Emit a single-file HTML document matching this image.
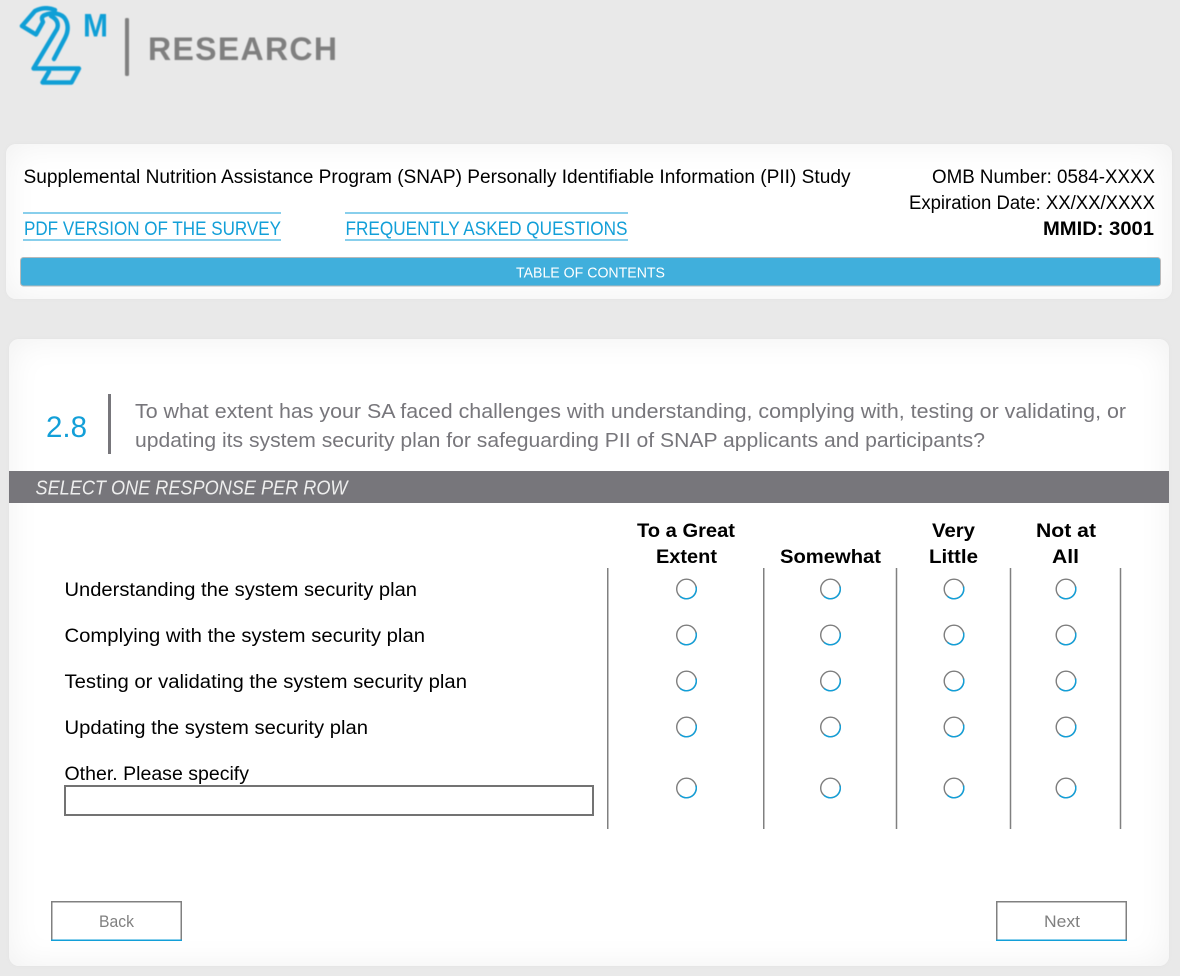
<!DOCTYPE html>
<html lang="en">
<head>
<meta charset="utf-8">
<title>2M Research Survey</title>
<style>
html,body{margin:0;padding:0;width:1180px;height:976px;overflow:hidden;background:#e9e9e9}
.card{position:absolute;background:#fff;border-radius:10px;box-shadow:inset 0 0 34px #f1f1f1,0 0 3px #e2e2e2}
svg{position:absolute;left:0;top:0}
text{font-family:"Liberation Sans",sans-serif;font-size:19px;fill:#000}
.b{font-weight:700}
.l{fill:#129fd8}
.g{fill:#77767b}
.logo{filter:blur(.5px)}
</style>
</head>
<body>
<div class="card" style="left:6px;top:144px;width:1166px;height:155px"></div>
<div class="card" style="left:9px;top:339px;width:1160px;height:627px"></div>
<svg width="1180" height="976" viewBox="0 0 1180 976" xmlns="http://www.w3.org/2000/svg">
<defs>
<g id="r">
<circle r="9.8" fill="#fff" stroke="#7d7d7d" stroke-width="1.4"/>
<path d="M9.5 -2.4A9.8 9.8 0 0 1 -6.5 7.3" fill="none" stroke="#129fd8" stroke-width="1.5"/>
</g>
</defs>

<!-- logo -->
<g class="logo">
<g fill="none" stroke="#0f9fd6" stroke-width="4.4" stroke-linejoin="round" stroke-linecap="round">
<path d="M22 26L35 11C42 7.500 49 7.500 55 10"/>
<path d="M22 26L36 34.500L43 22C41 18 42 16 45 15C52 12 62 13 65.500 19.500C69 26 68 32 65 38L54 59"/>
<path d="M51 16C57 19 59 24 57 29L33.500 68.500H79L71.500 82.500H42.500L49 71.500"/>
</g>
<text x="83" y="36.500" class="b" style="font-size:32px;fill:#0f9fd6" textLength="25" lengthAdjust="spacingAndGlyphs">M</text>
<rect x="125" y="18" width="4" height="58" rx="1.500" fill="#808080"/>
<text x="148" y="60" class="b" style="font-size:32px;fill:#7f7f7f" textLength="189" lengthAdjust="spacing">RESEARCH</text>
</g>

<!-- header card -->
<text x="23.500" y="183" textLength="827" lengthAdjust="spacingAndGlyphs">Supplemental Nutrition Assistance Program (SNAP) Personally Identifiable Information (PII) Study</text>
<rect x="23" y="212.500" width="258" height="1" fill="#129fd8"/>
<rect x="23" y="239.500" width="258" height="1" fill="#129fd8"/>
<rect x="345" y="212.500" width="283" height="1" fill="#129fd8"/>
<rect x="345" y="239.500" width="283" height="1" fill="#129fd8"/>
<text x="24" y="235" class="l" textLength="257" lengthAdjust="spacingAndGlyphs">PDF VERSION OF THE SURVEY</text>
<text x="345.500" y="235" class="l" textLength="282" lengthAdjust="spacingAndGlyphs">FREQUENTLY ASKED QUESTIONS</text>
<text x="932" y="183" textLength="223" lengthAdjust="spacingAndGlyphs">OMB Number: 0584-XXXX</text>
<text x="909" y="209" textLength="246" lengthAdjust="spacingAndGlyphs">Expiration Date: XX/XX/XXXX</text>
<text x="1043" y="235" class="b" textLength="111" lengthAdjust="spacingAndGlyphs">MMID: 3001</text>
<rect x="20.500" y="257.500" width="1140" height="28.500" rx="3" fill="#40afdc" stroke="#b9b9b9" stroke-width="1"/>
<text x="516" y="277.500" style="font-size:14.500px;fill:#fff" textLength="149" lengthAdjust="spacingAndGlyphs">TABLE OF CONTENTS</text>

<!-- question -->
<text x="46" y="437" class="l" style="font-size:30px" textLength="41" lengthAdjust="spacingAndGlyphs">2.8</text>
<rect x="108" y="394" width="3" height="60" fill="#77767b"/>
<text x="135" y="418" class="g" style="font-size:20px" textLength="991" lengthAdjust="spacingAndGlyphs">To what extent has your SA faced challenges with understanding, complying with, testing or validating, or</text>
<text x="135" y="447" class="g" style="font-size:20px" textLength="850" lengthAdjust="spacingAndGlyphs">updating its system security plan for safeguarding PII of SNAP applicants and participants?</text>
<rect x="9" y="471" width="1160" height="32" fill="#77767b"/>
<text x="35.500" y="494.500" style="font-size:20px;font-style:italic;fill:#eeeeee" textLength="312" lengthAdjust="spacingAndGlyphs">SELECT ONE RESPONSE PER ROW</text>

<!-- column headers -->
<text x="637" y="537" class="b" textLength="98" lengthAdjust="spacingAndGlyphs">To a Great</text>
<text x="656" y="563" class="b" textLength="61" lengthAdjust="spacingAndGlyphs">Extent</text>
<text x="780" y="563" class="b" textLength="101" lengthAdjust="spacingAndGlyphs">Somewhat</text>
<text x="932" y="537" class="b" textLength="43" lengthAdjust="spacingAndGlyphs">Very</text>
<text x="929" y="563" class="b" textLength="49" lengthAdjust="spacingAndGlyphs">Little</text>
<text x="1036" y="537" class="b" textLength="60" lengthAdjust="spacingAndGlyphs">Not at</text>
<text x="1052" y="563" class="b" textLength="27" lengthAdjust="spacingAndGlyphs">All</text>

<!-- column lines -->
<g fill="#808080">
<rect x="607" y="568" width="1.500" height="261"/>
<rect x="763" y="568" width="1.500" height="261"/>
<rect x="895.750" y="568" width="1.500" height="261"/>
<rect x="1009.750" y="568" width="1.500" height="261"/>
<rect x="1119.750" y="568" width="1.500" height="261"/>
</g>

<!-- rows -->
<text x="64.500" y="596" textLength="352.500" lengthAdjust="spacingAndGlyphs">Understanding the system security plan</text>
<text x="64.500" y="642" textLength="360.500" lengthAdjust="spacingAndGlyphs">Complying with the system security plan</text>
<text x="64.500" y="688" textLength="402.500" lengthAdjust="spacingAndGlyphs">Testing or validating the system security plan</text>
<text x="64.500" y="734" textLength="303.500" lengthAdjust="spacingAndGlyphs">Updating the system security plan</text>
<text x="64.500" y="780" textLength="184.500" lengthAdjust="spacingAndGlyphs">Other. Please specify</text>
<rect x="65" y="786" width="528" height="29" fill="#fff" stroke="#737373" stroke-width="2"/>

<use href="#r" x="686.500" y="589"/><use href="#r" x="830.500" y="589"/><use href="#r" x="954" y="589"/><use href="#r" x="1066" y="589"/>
<use href="#r" x="686.500" y="635"/><use href="#r" x="830.500" y="635"/><use href="#r" x="954" y="635"/><use href="#r" x="1066" y="635"/>
<use href="#r" x="686.500" y="681"/><use href="#r" x="830.500" y="681"/><use href="#r" x="954" y="681"/><use href="#r" x="1066" y="681"/>
<use href="#r" x="686.500" y="727"/><use href="#r" x="830.500" y="727"/><use href="#r" x="954" y="727"/><use href="#r" x="1066" y="727"/>
<use href="#r" x="686.500" y="788"/><use href="#r" x="830.500" y="788"/><use href="#r" x="954" y="788"/><use href="#r" x="1066" y="788"/>

<!-- buttons -->
<rect x="51.750" y="901.750" width="129.500" height="38.500" fill="#fff" stroke="#808080" stroke-width="1.500"/>
<rect x="51" y="939.500" width="131" height="1.500" fill="#129fd8"/>
<text x="99" y="927" style="font-size:17px;fill:#808080" textLength="35" lengthAdjust="spacingAndGlyphs">Back</text>
<rect x="996.750" y="901.750" width="129.500" height="38.500" fill="#fff" stroke="#808080" stroke-width="1.500"/>
<rect x="996" y="939.500" width="131" height="1.500" fill="#129fd8"/>
<text x="1044" y="927" style="font-size:17px;fill:#808080" textLength="36" lengthAdjust="spacingAndGlyphs">Next</text>
</svg>
</body>
</html>
